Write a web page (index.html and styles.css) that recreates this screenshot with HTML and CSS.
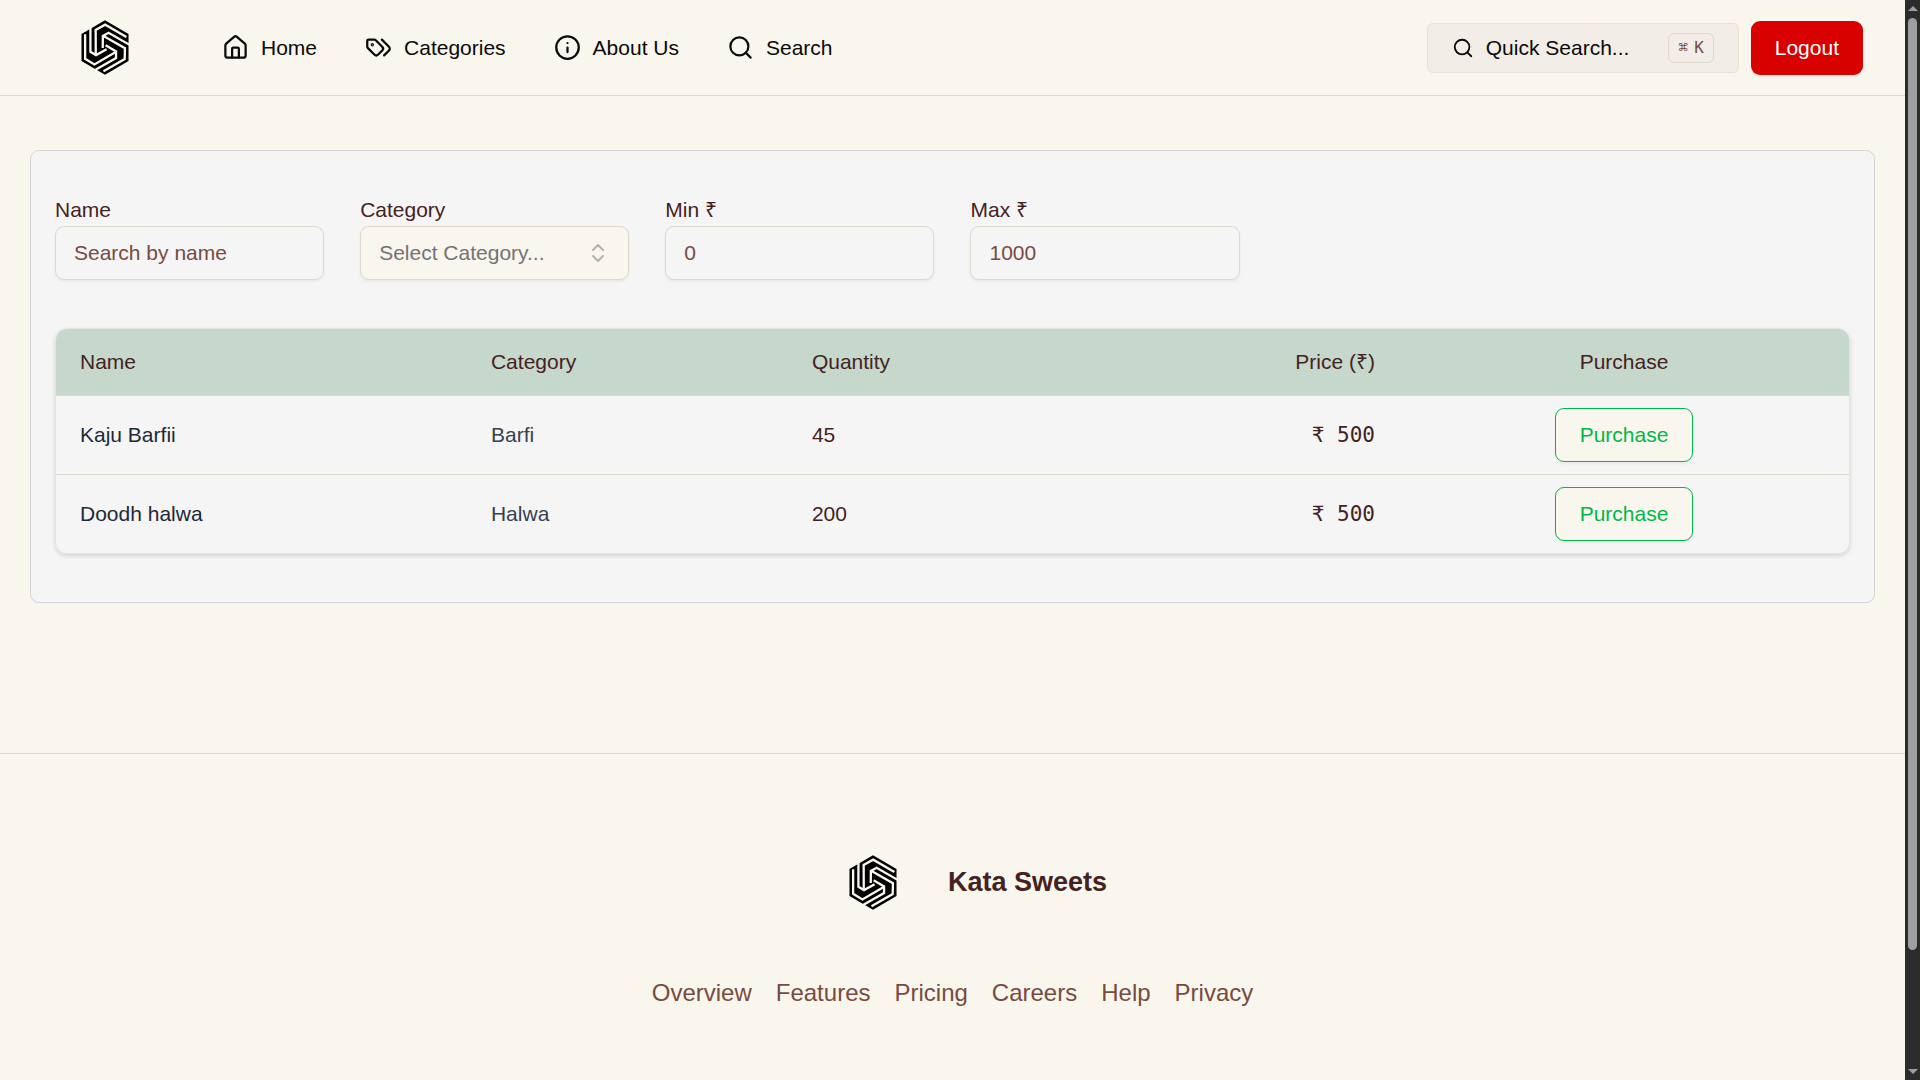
FILE: index.html
```html
<!DOCTYPE html>
<html lang="en">
<head>
<meta charset="utf-8">
<title>Kata Sweets</title>
<link rel="stylesheet" href="styles.css">
</head>
<body>
<svg class="sprite" aria-hidden="true">
  <symbol id="logo" viewBox="-72 -83 144 166">
    <defs>
      <g id="logo-arm">
        <path d="M-44-72V13L-27 23 5 5"/>
        <path d="M-60-40V34L-32 51 35 12"/>
      </g>
    </defs>
    <path class="logo-fill" d="M0-82 71-41V41L0 82-71 41V-41Z"/>
    <g class="logo-line">
      <use href="#logo-arm"/>
      <use href="#logo-arm" transform="rotate(120)"/>
      <use href="#logo-arm" transform="rotate(240)"/>
    </g>
  </symbol>
  <symbol id="search" viewBox="0 0 24 24"><circle cx="11" cy="11" r="8"/><path d="m21 21-4.300-4.300"/></symbol>
</svg>
<div class="shell">
  <div class="page">
    <header class="header">
      <a class="logo" href="#" aria-label="Kata Sweets"><svg class="logo-mark"><use href="#logo"/></svg></a>
      <nav class="nav" aria-label="Main">
        <a class="nav-link" href="#"><svg class="icon" viewBox="0 0 24 24"><path d="M15 21v-8a1 1 0 0 0-1-1h-4a1 1 0 0 0-1 1v8"/><path d="M3 10a2 2 0 0 1 .709-1.528l7-5.999a2 2 0 0 1 2.582 0l7 5.999A2 2 0 0 1 21 10v9a2 2 0 0 1-2 2H5a2 2 0 0 1-2-2z"/></svg>Home</a>
        <a class="nav-link" href="#"><svg class="icon" viewBox="0 0 24 24"><path d="m15 5 6.300 6.300a2.400 2.400 0 0 1 0 3.400L17 19"/><path d="M9.586 5.586A2 2 0 0 0 8.172 5H3a1 1 0 0 0-1 1v5.172a2 2 0 0 0 .586 1.414L8.290 18.290a2.426 2.426 0 0 0 3.420 0l3.580-3.580a2.426 2.426 0 0 0 0-3.420z"/><circle cx="6.500" cy="9.500" r=".5"/></svg>Categories</a>
        <a class="nav-link" href="#"><svg class="icon" viewBox="0 0 24 24"><circle cx="12" cy="12" r="10"/><path d="M12 16v-4M12 8h.01"/></svg>About Us</a>
        <a class="nav-link" href="#"><svg class="icon"><use href="#search"/></svg>Search</a>
      </nav>
      <div class="actions">
        <button class="quick" type="button"><svg class="icon icon-small"><use href="#search"/></svg>Quick Search...<kbd class="kbd"><span>⌘</span><span>K</span></kbd></button>
        <button class="button button-danger" type="button">Logout</button>
      </div>
    </header>
    <main class="main">
      <section class="panel">
        <form class="filters">
          <div class="field"><label for="name">Name</label><input class="control" id="name" type="text" placeholder="Search by name"></div>
          <div class="field"><label for="category">Category</label>
            <div class="select-wrap">
              <select class="control select" id="category"><option>Select Category...</option><option>Barfi</option><option>Halwa</option></select>
              <svg class="icon select-icon" viewBox="0 0 24 24"><path d="m7 15 5 5 5-5M7 9l5-5 5 5"/></svg>
            </div>
          </div>
          <div class="field"><label for="min">Min ₹</label><input class="control" id="min" type="text" inputmode="numeric" placeholder="0"></div>
          <div class="field"><label for="max">Max ₹</label><input class="control" id="max" type="text" inputmode="numeric" placeholder="1000"></div>
        </form>
        <div class="table-wrap">
          <table class="table">
            <thead>
              <tr><th class="col-name">Name</th><th class="col-category">Category</th><th class="col-quantity">Quantity</th><th class="col-price">Price (₹)</th><th class="col-action">Purchase</th></tr>
            </thead>
            <tbody>
              <tr><td class="name">Kaju Barfii</td><td class="category">Barfi</td><td>45</td><td class="price">₹ 500</td><td class="action"><button class="button button-buy" type="button">Purchase</button></td></tr>
              <tr><td class="name">Doodh halwa</td><td class="category">Halwa</td><td>200</td><td class="price">₹ 500</td><td class="action"><button class="button button-buy" type="button">Purchase</button></td></tr>
            </tbody>
          </table>
        </div>
      </section>
    </main>
    <footer class="footer">
      <div class="brand"><a class="logo" href="#" aria-label="Kata Sweets home"><svg class="logo-mark"><use href="#logo"/></svg></a><strong class="brand-name">Kata Sweets</strong></div>
      <nav class="footer-links" aria-label="Footer"><a href="#">Overview</a><a href="#">Features</a><a href="#">Pricing</a><a href="#">Careers</a><a href="#">Help</a><a href="#">Privacy</a></nav>
    </footer>
  </div>
  <div class="scrollbar" aria-hidden="true"><span class="arrow arrow-up"></span><span class="thumb"></span><span class="arrow arrow-down"></span></div>
</div>
</body>
</html>
```
FILE: styles.css
```css
:root {
  --bg: #f9f6ed;
  --ink: #452222;
  --soft: #784b40;
  --line: #ddd8c8;
  --surface: #f5f5f5;
}

* { box-sizing: border-box; }

body {
  margin: 0;
  background: var(--bg);
  color: var(--ink);
  font: 21px/30px "Liberation Sans", Arial, sans-serif;
}

a { color: inherit; text-decoration: none; }
button, input, select { font: inherit; }

.sprite { position: absolute; width: 0; height: 0; }
.logo-line { fill: none; stroke: var(--bg); stroke-width: 7; }
.logo-fill { fill: #000; }

.icon {
  flex: none;
  width: 27px;
  height: 27px;
  fill: none;
  stroke: currentColor;
  stroke-width: 2;
  stroke-linecap: round;
  stroke-linejoin: round;
}
.icon-small { width: 22px; height: 22px; }

.shell { display: grid; grid-template-columns: minmax(0, 1fr) 15px; min-height: 100vh; }

.header {
  display: flex;
  align-items: center;
  min-height: 96px;
  padding: 0 42px 0 30px;
  border-bottom: 1px solid var(--line);
  color: #0a0a0a;
}
.logo { display: flex; justify-content: center; width: 150px; }
.logo-mark { width: 48px; height: 55px; }
.nav { display: flex; gap: 48px; margin-left: 42px; }
.nav-link { display: flex; align-items: center; gap: 12px; }
.actions { display: flex; align-items: center; gap: 12px; margin-left: auto; }

.quick {
  display: flex;
  align-items: center;
  gap: 12px;
  width: 312px;
  height: 50px;
  padding: 0 24px;
  border: 1px solid #e8e2d6;
  border-radius: 6px;
  background: #f2ede6;
  color: #0a0a0a;
}
.kbd {
  display: flex;
  gap: 6px;
  margin-left: auto;
  padding: 0 9px;
  border: 1px solid var(--line);
  border-radius: 6px;
  color: var(--soft);
  font: 16px/28px "DejaVu Sans Mono", monospace;
}

.button {
  height: 54px;
  padding: 0 24px;
  border: 0;
  border-radius: 9px;
  box-shadow: 0 2px 3px rgb(0 0 0 / 5%);
}
.button-danger { background: #d90000; color: #fff; }
.button-buy { border: 1px solid #00b84a; background: var(--bg); color: #00b84a; }

.main { padding: 54px 30px 150px; }
.panel {
  padding: 48px 24px;
  border: 1px solid #d4d4d4;
  border-radius: 9px;
  background: var(--surface);
}

.filters { display: grid; grid-template-columns: repeat(6, 1fr); gap: 36px; margin-bottom: 48px; }
.field { display: flex; flex-direction: column; gap: 6px; }
.field label { line-height: 21px; }
.control {
  width: 100%;
  height: 54px;
  padding: 0 18px;
  border: 1px solid var(--line);
  border-radius: 9px;
  background: transparent;
  color: var(--ink);
  box-shadow: 0 2px 3px rgb(0 0 0 / 5%);
}
.control::placeholder { color: var(--soft); opacity: 1; }
.select-wrap { display: grid; align-items: center; }
.select { grid-area: 1 / 1; appearance: none; background: var(--bg); color: #737373; }
.select-icon {
  grid-area: 1 / 1;
  justify-self: end;
  width: 24px;
  height: 24px;
  margin-right: 19px;
  color: #b5b2ac;
  pointer-events: none;
}

.table-wrap {
  overflow: hidden;
  border: 1px solid #e5e5e5;
  border-radius: 12px;
  box-shadow: 0 2px 4px rgb(0 0 0 / 14%);
}
.table { width: 100%; border-collapse: separate; border-spacing: 0; table-layout: fixed; }
.table th { height: 67px; padding: 0 24px; background: #c5d8cb; font-weight: 400; text-align: left; }
.table td { padding: 12px 24px; }
.table th, .table tr:not(:last-child) td { border-bottom: 1px solid var(--line); }
.col-name { width: 22.92%; }
.col-category { width: 17.9%; }
.col-quantity { width: 17%; }
.col-action { width: 25.1%; }
.table .col-price, .price { text-align: right; }
.table .col-action, .action { text-align: center; }
.name { color: #1e2939; }
.category { color: #364153; }
.price { font-family: "DejaVu Sans Mono", monospace; }
.action .button { display: block; margin: 0 auto; }

.footer {
  display: flex;
  flex-direction: column;
  align-items: center;
  gap: 60px;
  padding: 96px 30px 48px;
  border-top: 1px solid var(--line);
}
.brand { display: flex; align-items: center; min-height: 65px; }
.brand-name { font-size: 27px; line-height: 37px; }
.footer-links { display: flex; gap: 24px; color: var(--soft); font-size: 24px; line-height: 36px; }

.scrollbar {
  display: flex;
  flex-direction: column;
  align-items: center;
  gap: 7px;
  padding: 6px 3px;
  background: #2c2c2c;
}
.arrow { border: 5px solid transparent; }
.arrow-up { border-top: 0; border-bottom-color: #9f9f9f; }
.arrow-down { margin-top: auto; border-bottom: 0; border-top-color: #9f9f9f; }
.thumb { width: 9px; height: 87.3%; border-radius: 5px; background: #9f9f9f; }
```
